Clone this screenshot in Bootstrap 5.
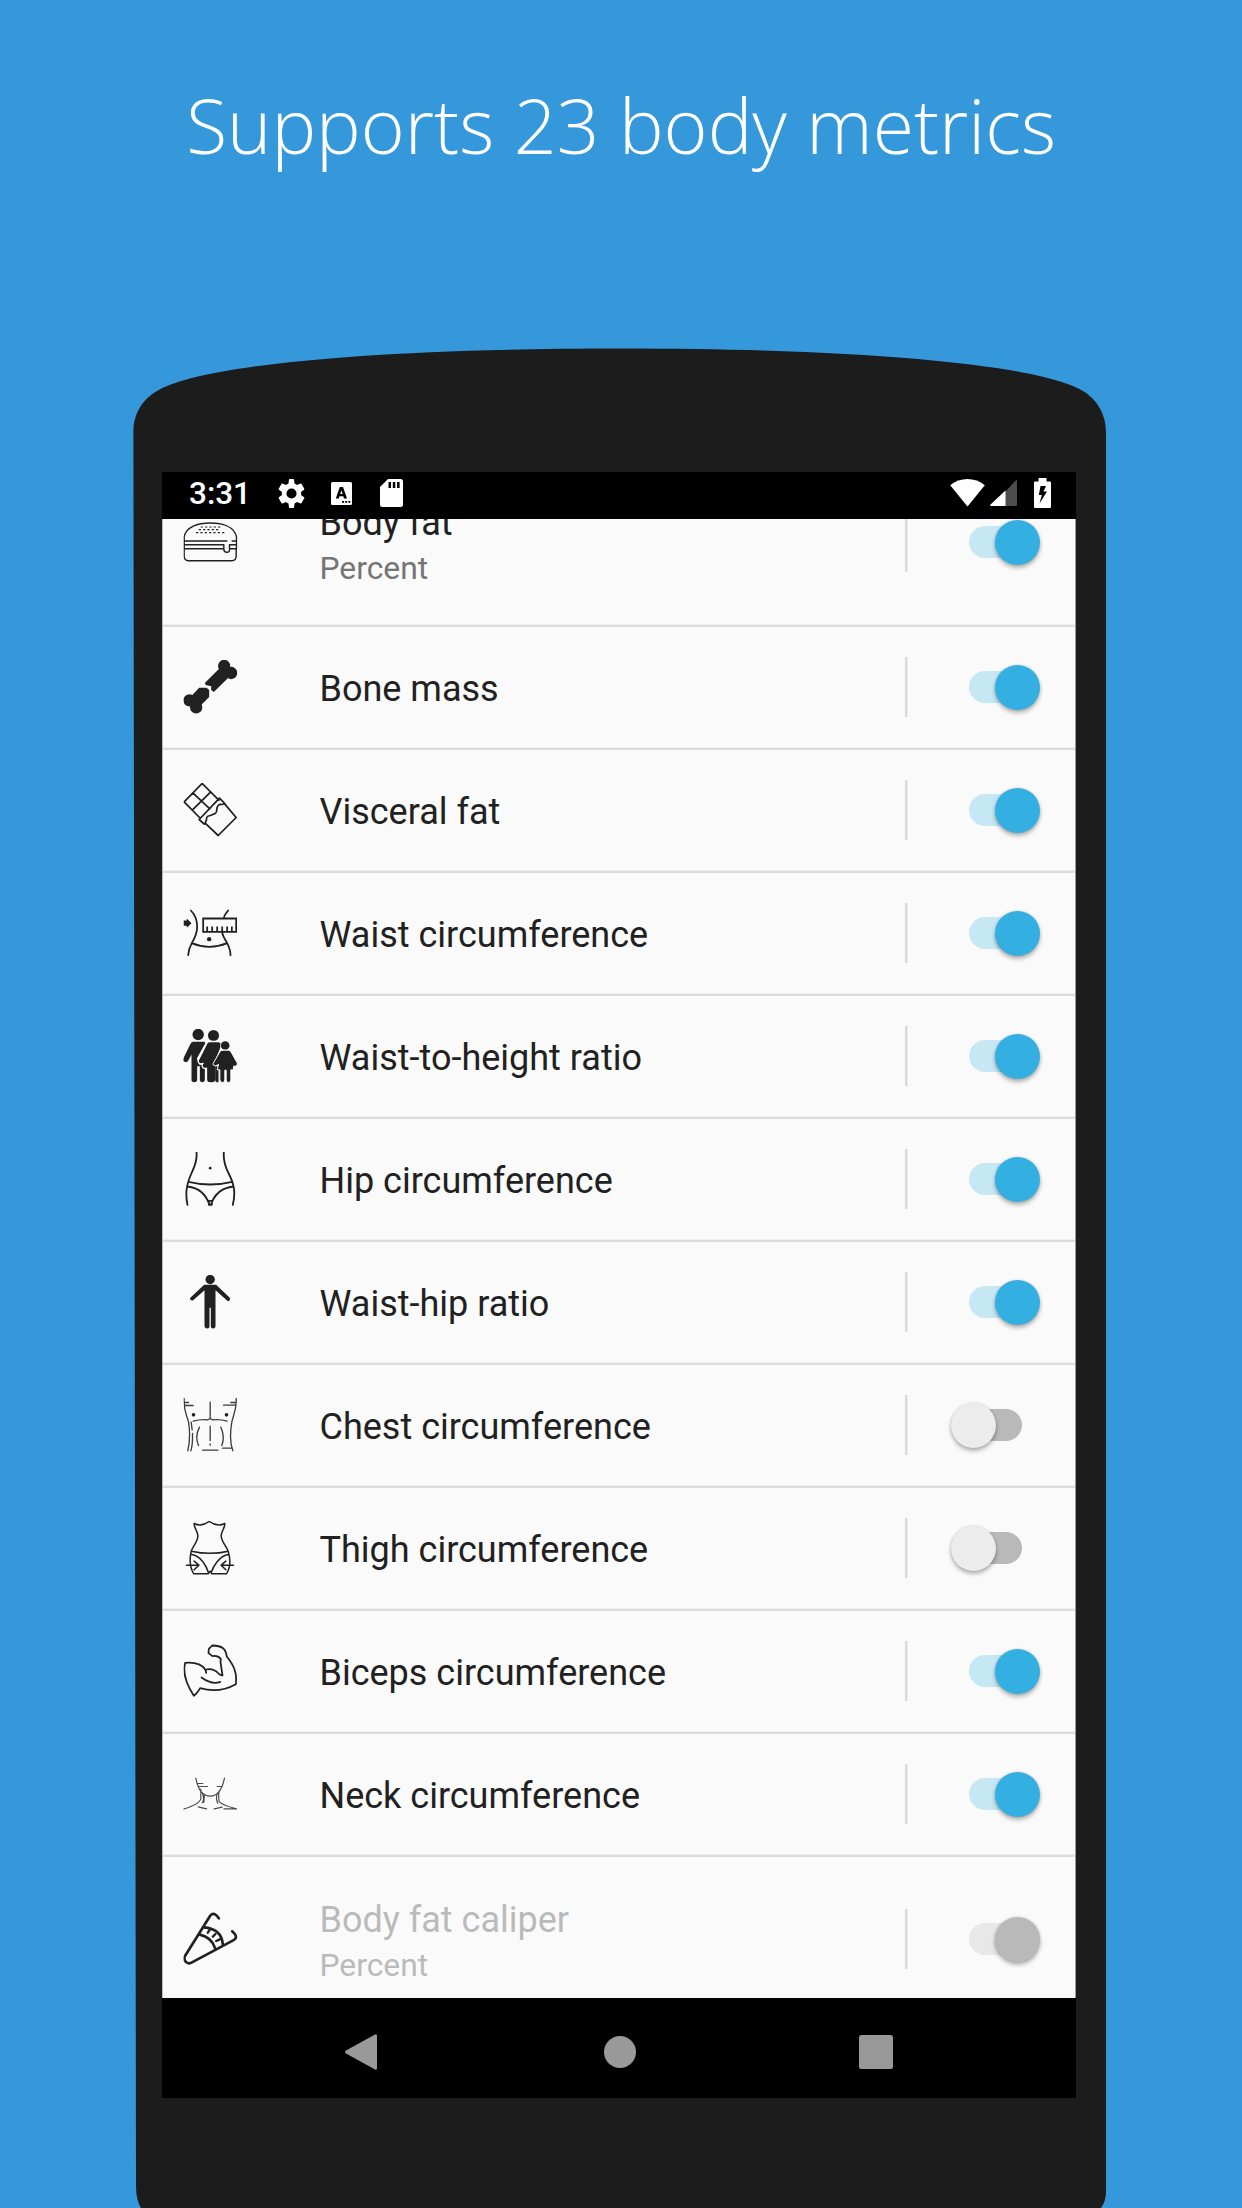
<!DOCTYPE html>
<html lang="en">
<head>
<meta charset="utf-8">
<meta name="viewport" content="width=device-width, initial-scale=1">
<title>Supports 23 body metrics</title>
<link href="https://cdn.jsdelivr.net/npm/bootstrap@5.3.0/dist/css/bootstrap.min.css" rel="stylesheet">
<style>
body{background:#3598db;font-family:Roboto,"Liberation Sans",sans-serif;height:2208px;overflow:hidden;-webkit-font-smoothing:antialiased}
.headline{font:300 75.1px/104px "Open Sans",sans-serif;color:#fff;height:348px;padding-top:73px;margin:0;white-space:nowrap}
.phone{width:973px;height:1860px;margin-left:133px;padding:124px 0 0 29px;background:#1c1c1c;
clip-path:path("M8 1860Q3 1852 3 1838L.4 84C.4 65 10 51 24 43C57 22 197 .5 487 .5C777 .5 917 22 950 43C963 51 973 65 973 84L973 1844Q973 1853 968 1860Z")}
.screen{width:914px;height:1626px;background:#000}
.statusbar{height:47px;padding:0 25px 5px 27px}
.clock{font-size:31.5px;font-weight:500;line-height:42px;width:61px;padding-top:1px}
.metrics{height:1479px;background:#fafafa;border-left:1px solid #bbb;border-right:1px solid #999}
.metric{height:123px;padding:0 34.5px 1px 21px;border-bottom:2px solid #dcdcdc;box-shadow:inset 0 -1px #efefef;flex:none}
.metric.tall{height:167px}
.metric.first{margin-top:-59px}
.ico{width:54px;height:54px;flex:none;fill:none;stroke:#212121;stroke-width:5.3;stroke-linejoin:round;stroke-linecap:round;transform:translateX(-.5px)}
.ico .s,.ico.s{fill:#212121;stroke:none}
.words{margin-left:81.500px;font-size:36px;line-height:42px;color:#212121;padding-top:4px;white-space:nowrap}
.words small{display:block;font-size:31.8px;line-height:42px;color:#757575;padding-top:3px}
.tall .words{padding-top:7px}
.disabled-row .words,.disabled-row .words small{color:#bababa}
.vline{width:2px;height:60px;background:#dadada;margin-right:44px;box-shadow:1px 0 #ececec}
.toggle{width:90px;height:45px;flex:none;padding:0 18.5px}
.toggle .track{width:53px;height:32px;border-radius:16px;background:#c6e8f4;flex:none}
.toggle .knob{width:45px;height:45px;border-radius:50%;background:#34afe1;flex:none;box-shadow:0 3px 4px rgba(0,0,0,.28),0 0 3px rgba(0,0,0,.15);margin-left:-27px;z-index:1}
.toggle.off{flex-direction:row-reverse}
.toggle.off .track{background:#b9b9b9}
.toggle.off .knob{background:#ececec;margin:0 -27px 0 0}
.disabled-row .track{background:#e8e8e8}
.disabled-row .knob{background:#b9b9b9}
.navkeys{height:100px;gap:222.5px}
.navkeys svg{width:35px;height:36px;margin-top:36px;fill:#999}
.statusbar svg{fill:#fff;flex:none}
.gear{margin-left:27px}.keyb{margin-left:25px}.sdcard{margin-left:28px}.signal{margin-left:5px}.battery{margin-left:17px}
</style>
<script src="https://cdn.jsdelivr.net/npm/bootstrap@5.3.0/dist/js/bootstrap.bundle.min.js" defer></script>
</head>
<body class="m-0">
<h1 class="headline text-center">Supports 23 body metrics</h1>
<main class="phone">
<div class="screen d-flex flex-column">
  <header class="statusbar d-flex align-items-center">
    <span class="clock text-white">3:31</span>
    <svg class="gear" width="29" height="29" viewBox="0 0 24 24"><path fill-rule="evenodd" d="M19.9 13.2c.1-.4.1-.8.1-1.2s0-.8-.1-1.2l2.5-2c.2-.2.3-.4.2-.7L20.200 4c-.1-.3-.4-.4-.7-.3l-2.900 1.200c-.6-.5-1.300-.9-2.100-1.200L14.100.6c0-.3-.3-.5-.6-.5h-3c-.3 0-.6.200-.6.5l-.4 3.100c-.8.3-1.500.7-2.100 1.200l-2.900-1.200c-.3-.1-.6 0-.7.3L1.400 8.100c-.2.3-.1.600.2.700l2.500 2c-.1.400-.1.800-.1 1.200s0 .8.1 1.200l-2.500 2c-.2.200-.3.400-.2.700L3.800 20c.1.300.4.400.7.300l2.900-1.200c.6.500 1.300.9 2.100 1.200l.4 3.100c0 .3.3.5.6.5h3c.3 0 .6-.2.6-.5l.4-3.100c.8-.3 1.500-.7 2.100-1.200l2.900 1.200c.3.100.6 0 .7-.3l2.400-4.100c.1-.3.1-.6-.2-.7zM12 16.200a4.200 4.200 0 1 1 0-8.400 4.200 4.200 0 0 1 0 8.400z"/></svg>
    <svg class="keyb" width="21" height="23" viewBox="0 0 21 23"><path fill-rule="evenodd" d="M1.500 0h18A1.500 1.500 0 0 1 21 1.500v20a1.500 1.500 0 0 1-1.500 1.500h-18A1.500 1.500 0 0 1 0 21.500v-20A1.500 1.500 0 0 1 1.500 0zM8.800 5 4.800 16.500h3l.7-2.200h3.800l.7 2.200h3L12 5zM10.400 8.200l1.200 3.800H9.200zM11 19v1.700h2V19zm3.200 0v1.700h2V19zm3.200 0v1.700h2V19z"/></svg>
    <svg class="sdcard" width="23" height="28" viewBox="0 0 23 28"><path fill-rule="evenodd" d="M8 0h12.500A2.500 2.500 0 0 1 23 2.500v23a2.500 2.500 0 0 1-2.500 2.500h-18A2.500 2.500 0 0 1 0 25.500V8zM8.500 3v6H11V3zm4.300 0v6h2.500V3zm4.300 0v6h2.500V3z"/></svg>
    <svg class="ms-auto" width="35" height="28" viewBox="0 0 35 28"><path d="M17.500 27.500.2 6.200C10-2 25-2 34.800 6.200z"/></svg>
    <svg class="signal" width="27" height="28" viewBox="0 0 27 28"><path d="M27 1v25q0 1-1 1H15V13L26 1.200z" fill="#4d4d4d"/><path d="M15.500 11.500V27H1q-1.500-.5-.5-1.500z"/></svg>
    <svg class="battery" width="17" height="30" viewBox="0 0 17 30"><path fill-rule="evenodd" d="M4.500 0h8v3.500H16q1 0 1 1V29q0 1-1 1H1q-1 0-1-1V4.500q0-1 1-1h3.500zM6.500 8 4.800 17h3L5.500 25.500l7.500-12H9.500L12 8z"/></svg>
  </header>
  <section class="metrics d-flex flex-column overflow-hidden">
    <div class="metric tall first d-flex align-items-center">
      <svg class="ico" viewBox="57 15 162 162" style="stroke-width:4.300"><path d="M59 115V80C65 50 100 39 137 39S209 50 216 80V115M59 93H187M203 93H216M59 104H178V118Q178 127 187 127T195 118V104H216M59 116H178M195 116H216M59 116V139Q59 152 72 152H202Q215 152 215 139V116"/><path d="M110 51h60M104 59h65M96 68h84" stroke-dasharray="4 9" stroke-width="3.500"/></svg>
      <div class="words">Body fat<small>Percent</small></div><span class="vline ms-auto"></span>
      <span class="toggle d-flex align-items-center"><span class="track"></span><span class="knob"></span></span>
    </div>
    <div class="metric d-flex align-items-center">
      <svg class="ico s" viewBox="57 451 162 162"><circle cx="179" cy="469" r="18.500"/><circle cx="200" cy="490" r="18.500"/><circle cx="75" cy="572" r="18.500"/><circle cx="95" cy="593" r="18.500"/><path d="M121 520 170 471 199 498 190 506 148 547 140 541V530L124 526ZM104 534H126L134 541V562L104 592 76 564Z"/></svg>
      <div class="words">Bone mass</div><span class="vline ms-auto"></span>
      <span class="toggle d-flex align-items-center"><span class="track"></span><span class="knob"></span></span>
    </div>
    <div class="metric d-flex align-items-center">
      <svg class="ico" viewBox="57 40.500 162 162"><path d="M105 144 59 97 113 42 163 92M85 70 136 118M84 121 138 68M104 150 165 86 181 102 172 105C163 103 157 110 157 120 155 137 151 130 143 136 133 141 125 137 126 151 124 158 123 161 119 164ZM181 104 215 144 161 198 122 161"/></svg>
      <div class="words">Visceral fat</div><span class="vline ms-auto"></span>
      <span class="toggle d-flex align-items-center"><span class="track"></span><span class="knob"></span></span>
    </div>
    <div class="metric d-flex align-items-center">
      <svg class="ico" viewBox="57 409.500 162 162"><path d="M79 423C94 438 98 453 98 472 98 493 91 506 82 521 75 533 72 545 71 557M191 423 184 432Q179 438 178 446M173 489C175 502 183 511 188 521 195 535 198 545 198 557M82 521Q134 543 188 521"/><path stroke-linejoin="miter" stroke-linecap="butt" d="M116 447H215V487H116ZM128 486V471M143 486V471M158 486V471M173 486V471M188 486V471M202 486V471"/><circle class="s" cx="134" cy="509" r="6.500"/><path class="s" d="M57 453H67V447L81 461 67 475V469H57Z"/></svg>
      <div class="words">Waist circumference</div><span class="vline ms-auto"></span>
      <span class="toggle d-flex align-items-center"><span class="track"></span><span class="knob"></span></span>
    </div>
    <div class="metric d-flex align-items-center">
      <svg class="ico s" viewBox="57 43.500 162 162"><circle cx="101" cy="60" r="17"/><path d="M86 82H118Q123 82 122 87L97 132 105 151H121V195Q121 203 113 203T106 195V155H98V195Q98 203 89 203T81 195V120L71 139Q67 145 60 142T56 133L77 90Q80 82 86 82Z"/><circle cx="147" cy="63" r="19" fill="#fafafa"/><circle cx="147" cy="63" r="16.500"/><path stroke="#fafafa" stroke-width="4" d="M134 81H160Q170 81 173 91L154 139V196Q154 205 145 205H136Q126 205 126 196V161Q115 164 113 155 112 149 116 147 106 150 103 145 99 140 103 134L126 88Q129 81 134 81Z"/><path d="M152 155H162V203H157Q152 203 152 196Z"/><circle cx="182" cy="93" r="15" fill="#fafafa"/><circle cx="182" cy="93" r="13"/><path stroke="#fafafa" stroke-width="3" d="M174 107H191Q197 107 200 113L218 145Q221 154 213 155H207V166H199V196Q199 204 192 204T185 196V167H181V196Q181 204 174 204T166 196V166H158L162 150Q152 158 146 151 145 147 148 143L166 112Q169 107 174 107Z"/></svg>
      <div class="words">Waist-to-height ratio</div><span class="vline ms-auto"></span>
      <span class="toggle d-flex align-items-center"><span class="track"></span><span class="knob"></span></span>
    </div>
    <div class="metric d-flex align-items-center">
      <svg class="ico" viewBox="57 412.500 162 162" style="stroke-width:5.500"><path d="M96 414C99 439 90 456 82 474 65 511 62 537 69 571M178 414C176 439 182 456 191 474 211 511 213 537 205 571M72 502Q137 518 203 502M69 516C105 520 126 544 135 571M207 516C169 520 148 544 139 571M133 559H142V571H133Z"/><circle class="s" cx="137" cy="461" r="4"/></svg>
      <div class="words">Hip circumference</div><span class="vline ms-auto"></span>
      <span class="toggle d-flex align-items-center"><span class="track"></span><span class="knob"></span></span>
    </div>
    <div class="metric d-flex align-items-center">
      <svg class="ico s" viewBox="57 406.500 162 162"><circle cx="137" cy="420" r="14"/><path d="M119 436H155L195 474Q199 479 195 483T187 482L153 452V560Q153 567 146 567T139 560V505H135V560Q135 567 128 567T120 560V452L86 482Q82 485 78 481T79 473Z"/></svg>
      <div class="words">Waist-hip ratio</div><span class="vline ms-auto"></span>
      <span class="toggle d-flex align-items-center"><span class="track"></span><span class="knob"></span></span>
    </div>
    <div class="metric d-flex align-items-center">
      <svg class="ico" viewBox="57 25.500 162 162" style="stroke-width:4;stroke:#3c3c3c"><path d="M59 27C57 65 66 75 72 97 77 128 76 157 70 184M60 39H72M60 48H86M215 27C217 59 207 76 202 97 196 132 198 165 205 184M199 39H214M177 47H214M137 38V87M86 95Q108 89 129 91L137 87 144 91Q168 89 188 95M80 98 83 121M84 132Q85 165 79 184M105 113Q90 140 102 168M169 113Q182 140 172 168M137 110V153M137 163V167M114 182H160M174 176H202"/><circle class="s" cx="87" cy="76" r="5.500"/><circle class="s" cx="186" cy="76" r="5.500"/></svg>
      <div class="words">Chest circumference</div><span class="vline ms-auto"></span>
      <span class="toggle off d-flex align-items-center"><span class="track"></span><span class="knob"></span></span>
    </div>
    <div class="metric d-flex align-items-center">
      <svg class="ico" viewBox="57 394.500 162 162" style="stroke-width:4.500"><path d="M89 402Q111 413 134 396 158 413 181 402C182 414 171 425 170 438 170 456 185 469 191 485 199 512 197 536 186 553H142L137 545 131 553H88C76 535 75 509 80 485 87 467 101 455 100 438 99 424 88 415 89 402ZM81 485Q137 498 191 485M81 495C110 499 126 530 132 550M192 495C164 499 146 530 140 550M66 527H101M89 515 103 527 89 541M207 527H172M184 515 170 527 184 541"/></svg>
      <div class="words">Thigh circumference</div><span class="vline ms-auto"></span>
      <span class="toggle off d-flex align-items-center"><span class="track"></span><span class="knob"></span></span>
    </div>
    <div class="metric d-flex align-items-center">
      <svg class="ico" viewBox="57 43.500 162 162"><path d="M125 130C122 105 91 97 62 100 53 133 67 166 88 199 96 194 101 186 107 176 142 186 180 183 214 164 219 125 204 103 187 81 183 56 173 49 143 48L133 58 132 71 144 80Q159 77 169 88L168 98 174 138Q166 137 162 132 147 116 125 120M111 144C133 160 149 164 167 157"/></svg>
      <div class="words">Biceps circumference</div><span class="vline ms-auto"></span>
      <span class="toggle d-flex align-items-center"><span class="track"></span><span class="knob"></span></span>
    </div>
    <div class="metric d-flex align-items-center">
      <svg class="ico" viewBox="57 412.500 162 162" style="stroke-width:3.500;stroke:#4a4a4a"><path d="M94 446C101 485 119 500 138 500 157 500 172 484 180 446M101 462H115M104 471H129M158 471H172M109 479V507Q107 523 57 539M164 484Q161 503 164 516 170 526 216 538M114 492C118 503 118 514 113 520M120 495 118 519M158 494Q153 508 160 521M101 532 126 538M173 533 149 538M178 538H216"/></svg>
      <div class="words">Neck circumference</div><span class="vline ms-auto"></span>
      <span class="toggle d-flex align-items-center"><span class="track"></span><span class="knob"></span></span>
    </div>
    <div class="metric tall disabled-row d-flex align-items-center">
      <svg class="ico" viewBox="192 276 162 162" style="stroke-width:8"><path d="M298 295Q284 274 273 286L197 407C190 420 202 435 216 428L341 361Q359 352 338 334M241 344Q276 352 286 383M253 322Q306 326 310 373"/><path d="M265 338 271 329M280 350 288 342M290 363 301 358" stroke-width="7"/></svg>
      <div class="words">Body fat caliper<small>Percent</small></div><span class="vline ms-auto"></span>
      <span class="toggle d-flex align-items-center"><span class="track"></span><span class="knob"></span></span>
    </div>
  </section>
  <nav class="navkeys d-flex justify-content-center align-items-start">
    <svg viewBox="0 0 35 36"><path d="M33 2v32q0 2.500-2 1.500L2 19.500Q0 18 2 16.500L31 .5q2-1 2 1.500z"/></svg>
    <svg viewBox="0 0 35 36"><circle cx="18" cy="18" r="16"/></svg>
    <svg viewBox="0 0 35 36"><rect x="0" y="1" width="34" height="34" rx="2.500"/></svg>
  </nav>
</div>
</main>
</body>
</html>
